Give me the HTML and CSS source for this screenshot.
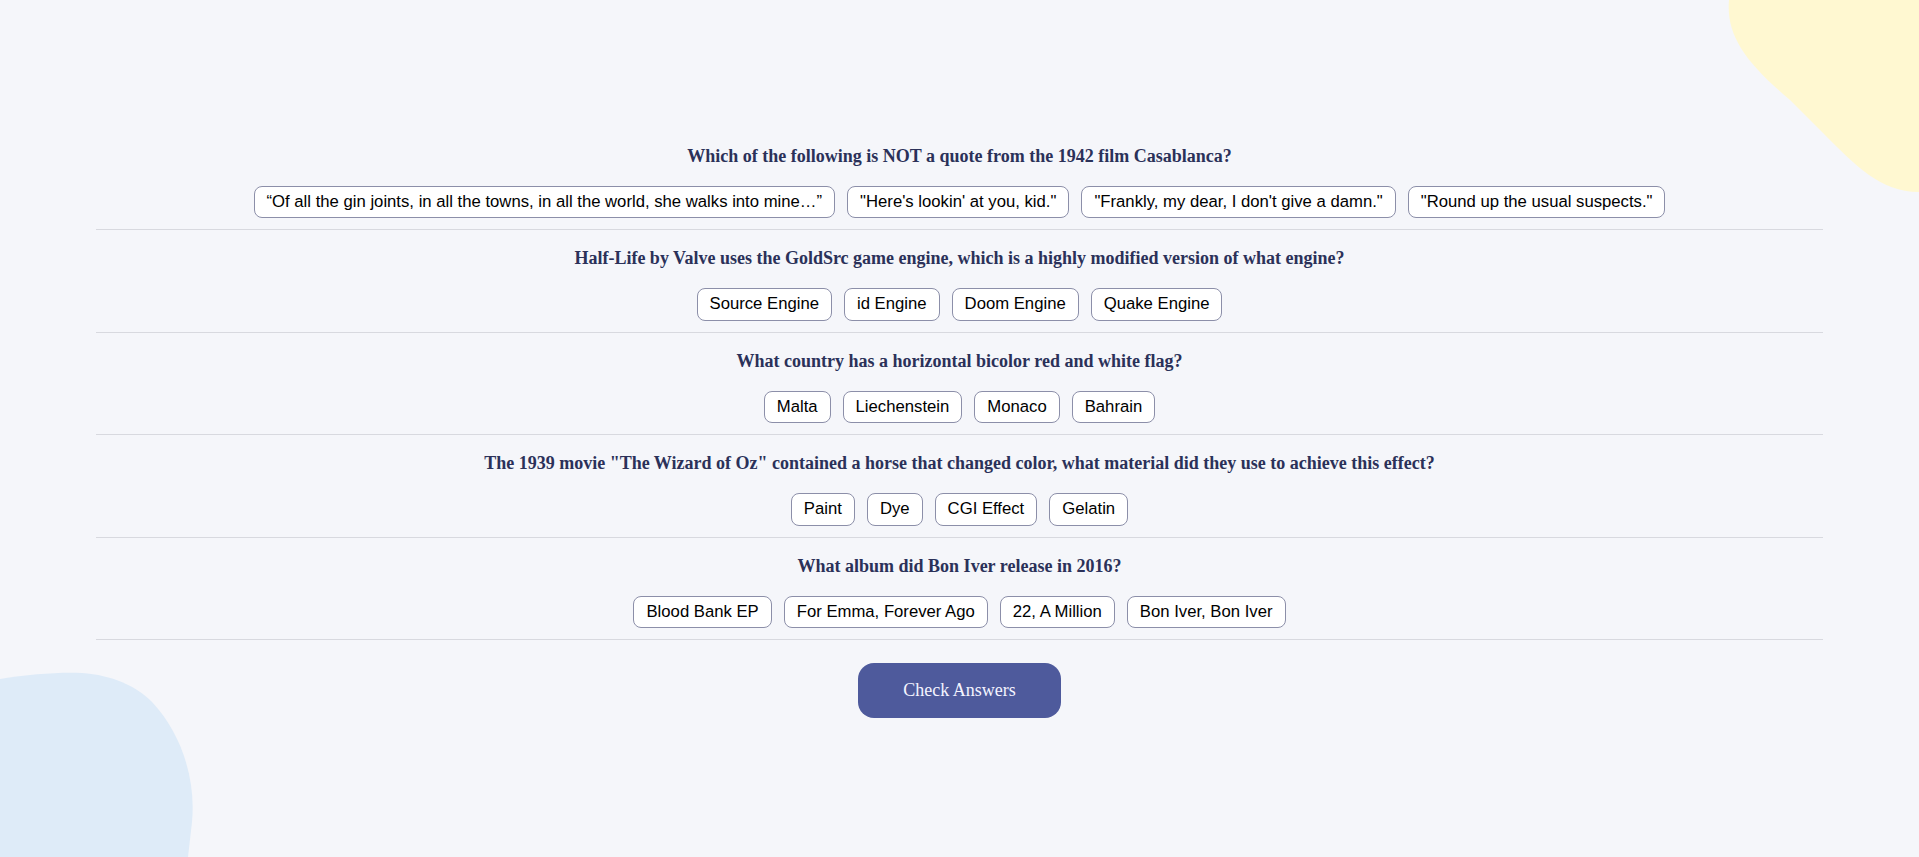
FILE: index.html
```html
<!DOCTYPE html>
<html lang="en">
<head>
<meta charset="utf-8">
<title>Quiz</title>
<link rel="stylesheet" href="styles.css">
</head>
<body>
<svg class="blob blob-yellow" width="200" height="200" viewBox="1719 0 200 200" aria-hidden="true">
  <path d="M1729,0 C1726,35 1745,62 1790,100 L1823,133 C1855,165 1880,192 1919,192 L1919,0 Z" fill="#fff8d1"/>
</svg>
<svg class="blob blob-blue" width="200" height="190" viewBox="0 667 200 190" aria-hidden="true">
  <path d="M0,679 C30,674 60,672 82,673 C112,675 136,686 152,702 C182,734 196,780 192,822 L188,857 L0,857 Z" fill="#deebf8"/>
</svg>
<main class="quiz">
  <section class="question">
    <h3 class="q-text">Which of the following is NOT a quote from the 1942 film Casablanca?</h3>
    <div class="answers">
      <button class="answer">“Of all the gin joints, in all the towns, in all the world, she walks into mine…”</button>
      <button class="answer">"Here's lookin' at you, kid."</button>
      <button class="answer">"Frankly, my dear, I don't give a damn."</button>
      <button class="answer">"Round up the usual suspects."</button>
    </div>
  </section>
  <section class="question">
    <h3 class="q-text">Half-Life by Valve uses the GoldSrc game engine, which is a highly modified version of what engine?</h3>
    <div class="answers">
      <button class="answer">Source Engine</button>
      <button class="answer">id Engine</button>
      <button class="answer">Doom Engine</button>
      <button class="answer">Quake Engine</button>
    </div>
  </section>
  <section class="question">
    <h3 class="q-text">What country has a horizontal bicolor red and white flag?</h3>
    <div class="answers">
      <button class="answer">Malta</button>
      <button class="answer">Liechenstein</button>
      <button class="answer">Monaco</button>
      <button class="answer">Bahrain</button>
    </div>
  </section>
  <section class="question">
    <h3 class="q-text">The 1939 movie "The Wizard of Oz" contained a horse that changed color, what material did they use to achieve this effect?</h3>
    <div class="answers">
      <button class="answer">Paint</button>
      <button class="answer">Dye</button>
      <button class="answer">CGI Effect</button>
      <button class="answer">Gelatin</button>
    </div>
  </section>
  <section class="question">
    <h3 class="q-text">What album did Bon Iver release in 2016?</h3>
    <div class="answers">
      <button class="answer">Blood Bank EP</button>
      <button class="answer">For Emma, Forever Ago</button>
      <button class="answer">22, A Million</button>
      <button class="answer">Bon Iver, Bon Iver</button>
    </div>
  </section>
  <div class="actions">
    <button class="check">Check Answers</button>
  </div>
</main>
</body>
</html>
```
FILE: styles.css
```css
html, body {
  margin: 0;
  padding: 0;
}
body {
  background: #f5f6fa;
  min-height: 857px;
  overflow: hidden;
  position: relative;
  font-family: "Liberation Serif", "Times New Roman", serif;
}
.blob {
  position: absolute;
  z-index: 0;
}
.blob-yellow {
  top: 0;
  right: 0;
}
.blob-blue {
  left: 0;
  bottom: 0;
}
.quiz {
  position: relative;
  z-index: 1;
  width: 90%;
  margin: 0 auto;
  padding-top: 128px;
}
.question {
  border-bottom: 1px solid #d8d9df;
  padding-bottom: 11px;
  text-align: center;
}
.q-text {
  font-family: "Liberation Serif", "Times New Roman", serif;
  font-weight: bold;
  font-size: 18px;
  line-height: 21px;
  color: #2b3159;
  margin: 18px 0 19px;
}
.answers {
  display: flex;
  justify-content: center;
  flex-wrap: wrap;
  gap: 12px;
}
.answer {
  font-family: "Liberation Sans", Arial, sans-serif;
  font-size: 16.7px;
  color: #000;
  background: #fff;
  border: 1px solid #8c8fa9;
  border-radius: 8px;
  padding: 6px 12px;
  line-height: 18.4px;
  cursor: pointer;
}
.actions {
  display: flex;
  justify-content: center;
  padding-top: 23px;
}
.check {
  font-family: "Liberation Serif", "Times New Roman", serif;
  font-size: 18px;
  color: #f4f4ff;
  background: #4e5a9c;
  border: none;
  border-radius: 16px;
  padding: 17px 45px;
  line-height: normal;
  cursor: pointer;
}
```
